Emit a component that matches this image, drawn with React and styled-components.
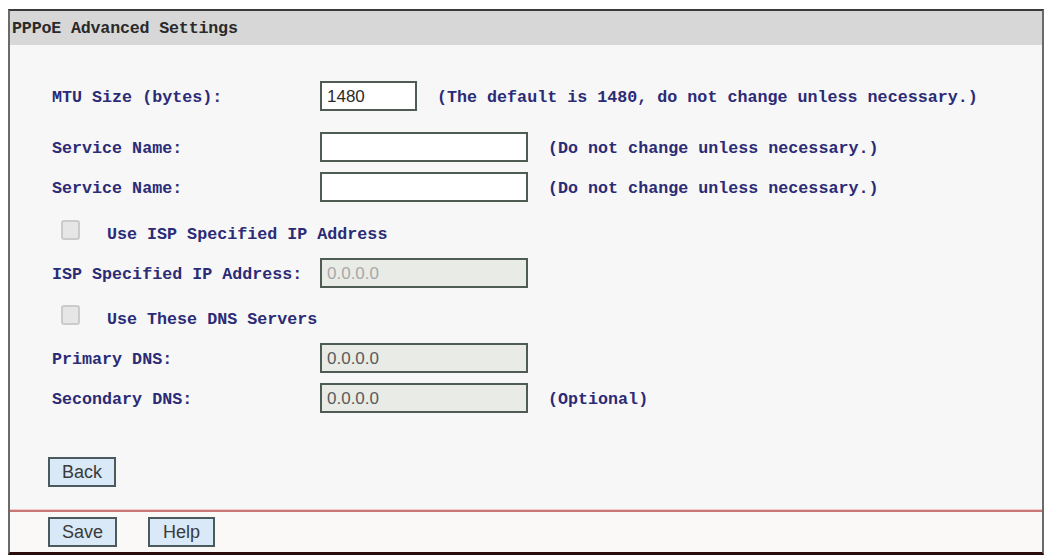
import React from 'react'
import styled, { createGlobalStyle } from 'styled-components'

const GlobalStyle = createGlobalStyle`
  body {
    margin: 0;
    background: #ffffff;
  }
`

const rows = [
  { label: 'Service Name:', value: '', hint: '(Do not change unless necessary.)', space: 11 },
  { label: 'Service Name:', value: '', hint: '(Do not change unless necessary.)', space: 0 },
]

function App() {
  return (
    <>
      <GlobalStyle />
      <Frame>
        <Title>PPPoE Advanced Settings</Title>
        <Body>
          <Row $space={0}>
            <Label>MTU Size (bytes):</Label>
            <Field $short defaultValue="1480" />
            <Hint>(The default is 1480, do not change unless necessary.)</Hint>
          </Row>

          {rows.map((r, i) => (
            <Row key={i} $space={r.space}>
              <Label>{r.label}</Label>
              <Field defaultValue={r.value} />
              <Hint>{r.hint}</Hint>
            </Row>
          ))}

          <Row $space={3}>
            <Check />
            <CheckLabel>Use ISP Specified IP Address</CheckLabel>
          </Row>

          <Row $space={3}>
            <Label>ISP Specified IP Address:</Label>
            <Field disabled $faint defaultValue="0.0.0.0" />
          </Row>

          <Row $space={2}>
            <Check />
            <CheckLabel>Use These DNS Servers</CheckLabel>
          </Row>

          <Row $space={3}>
            <Label>Primary DNS:</Label>
            <Field disabled defaultValue="0.0.0.0" />
          </Row>

          <Row $space={0}>
            <Label>Secondary DNS:</Label>
            <Field disabled defaultValue="0.0.0.0" />
            <Hint>(Optional)</Hint>
          </Row>

          <ButtonRow>
            <Button>Back</Button>
          </ButtonRow>
        </Body>
        <Footer>
          <Button>Save</Button>
          <Button>Help</Button>
        </Footer>
      </Frame>
    </>
  )
}

export default App

const Frame = styled.div`
  margin: 9px 0 0 8px;
  width: 1036px;
  height: 546px;
  box-sizing: border-box;
  background: #f7f7f7;
  border-top: 2px solid #3a3a3a;
  border-left: 2px solid #6a6a6a;
  border-right: 2px solid #6a6a6a;
  border-bottom: 3px solid #2a0c0c;
  display: flex;
  flex-direction: column;
`

const Title = styled.div`
  height: 34px;
  background: #d7d7d7;
  display: flex;
  align-items: center;
  padding-left: 2px;
  font-family: "Liberation Mono", monospace;
  font-size: 16.7px;
  font-weight: bold;
  letter-spacing: -0.2px;
  color: #2a2a2a;
`

const Body = styled.div`
  flex: 1;
  padding: 31px 0 0 42px;
  display: flex;
  flex-direction: column;
`

const Row = styled.div`
  height: 40px;
  margin-top: ${p => p.$space}px;
  display: flex;
  align-items: center;
`

const Label = styled.span`
  width: 268px;
  flex-shrink: 0;
  padding-top: 2px;
  font-family: "Liberation Mono", monospace;
  font-size: 16.7px;
  font-weight: bold;
  color: #2b2b76;
`

const Hint = styled(Label)`
  width: auto;
  margin-left: 20px;
`

const Field = styled.input`
  box-sizing: border-box;
  width: ${p => (p.$short ? '97px' : '208px')};
  height: 30px;
  margin: 0;
  padding: 2px 5px 0;
  border: 2px solid #4e5c54;
  background: ${p => (p.disabled ? '#e9ebe6' : '#ffffff')};
  font-family: "Liberation Sans", Arial, sans-serif;
  font-size: 17px;
  color: ${p => (p.$faint ? '#a8a8a8' : p.disabled ? '#5a5a5a' : '#2a2a2a')};
  -webkit-text-fill-color: ${p => (p.$faint ? '#a8a8a8' : p.disabled ? '#5a5a5a' : '#2a2a2a')};
  opacity: 1;
  outline: none;
`

const Check = styled.span`
  box-sizing: border-box;
  width: 19px;
  height: 20px;
  margin-left: 9px;
  border: 2px solid #cbcbcb;
  border-radius: 3px;
  background: #e6e6e6;
`

const CheckLabel = styled(Label)`
  width: auto;
  margin-left: 27px;
  padding-top: 8px;
`

const ButtonRow = styled.div`
  margin: 39px 0 0 -4px;
  display: flex;
`

const Button = styled.button`
  box-sizing: border-box;
  min-width: 67px;
  height: 30px;
  padding: 0 12px;
  border: 2px solid #4a5a5e;
  background: #d9e9f7;
  font-family: "Liberation Sans", Arial, sans-serif;
  font-size: 18px;
  color: #3a3a3a;
  cursor: pointer;
`

const Footer = styled.div`
  height: 40px;
  border-top: 2px solid #c9787a;
  box-shadow: 0 -1px 0 #f3caca;
  background: #fbf8f8;
  display: flex;
  align-items: center;
  gap: 31px;
  padding-left: 38px;
`
